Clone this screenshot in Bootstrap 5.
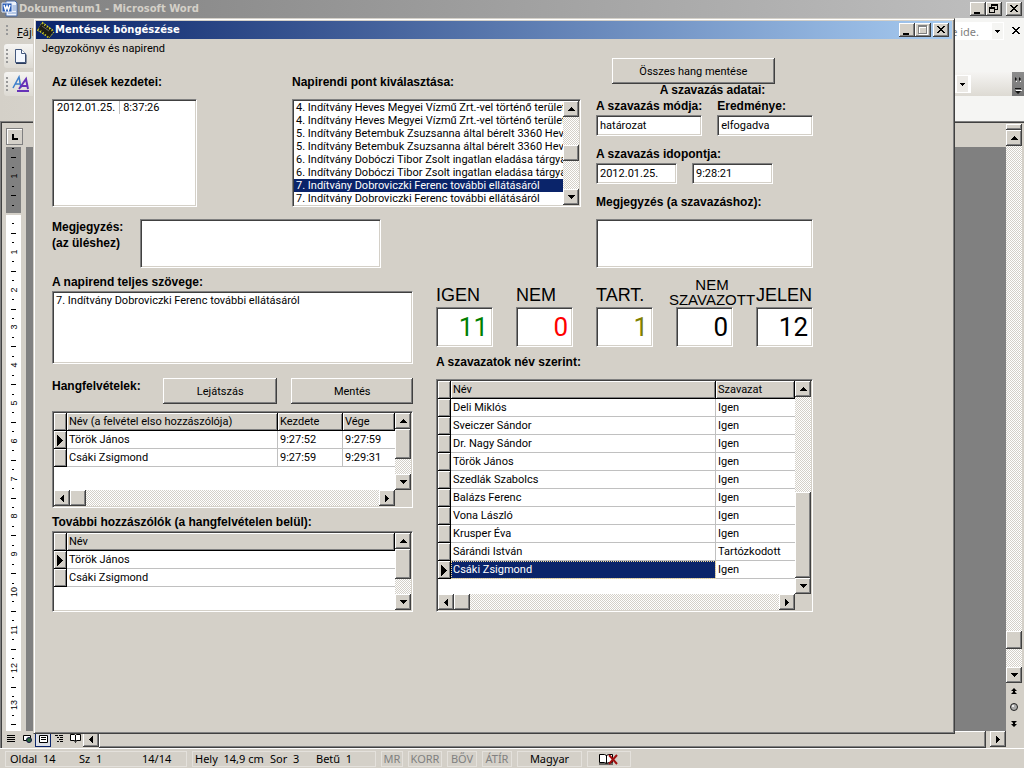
<!DOCTYPE html>
<html lang="hu">
<head>
<meta charset="utf-8">
<meta name="viewport" content="width=device-width, initial-scale=1">
<title>Mentések böngészése</title>
<link href="https://cdn.jsdelivr.net/npm/bootstrap@5.3.0/dist/css/bootstrap.min.css" rel="stylesheet">
<style>
:root{--face:#d4d0c8;--dark:#404040;--mid:#808080;--navy:#0a246a;--ui:"Noto Sans","Open Sans",sans-serif;--form:Roboto,"Liberation Sans",sans-serif;--capfont:"Liberation Sans",Arial,sans-serif}
body{background:var(--face);color:#000;font-family:var(--ui);font-size:11px;line-height:13px;height:100vh;overflow:hidden}
button,input,textarea,select{font:inherit;color:inherit;border:0;border-radius:0;margin:0;padding:0;background:none}
a{color:inherit;text-decoration:none}
svg{display:block}
.raised{background:var(--face);box-shadow:inset -1px -1px var(--dark),inset 1px 1px #fff,inset -2px -2px var(--mid)}
.sunken{background:#fff;border:1px solid;border-color:var(--mid) #fff #fff var(--mid);padding:1px;box-shadow:inset 1px 1px var(--dark),inset -1px -1px var(--face)}
.dither{background:repeating-conic-gradient(#fff 0 25%,var(--face) 0 50%) 0 0/2px 2px}
.sq{width:16px;height:16px;flex:none;display:flex;align-items:center;justify-content:center}
.winbtn{width:16px;height:14px;flex:none}
.titletext{font-family:"DejaVu Sans",sans-serif;font-weight:700;font-size:10px;line-height:18px}

/* word processor */
.wtitle{height:18px;padding-right:2px;background:linear-gradient(90deg,#808080,#c0c0c0);color:var(--face)}
.wbars{height:103px;background:linear-gradient(90deg,#d4d0c8,#f5f5f3 80%)}
.wmenu{height:26px}
.tbar{height:24px;background:linear-gradient(#f5f4f2,#dddad3);border-radius:3px 0 0 3px}
.askbox{width:100px;height:18px;background:#fff;color:#808080;white-space:nowrap}
.askdrop{width:11px;background:#f5f5f3;margin:1px}
.tdrop{height:18px;width:18px;background:#fff;padding-left:4px}
.tdrop span{background:#eceae6;width:11px;height:16px}
.chevs{width:12px;height:24px;margin-left:41px;background:linear-gradient(#8c8c8c,#757575)}
.wbody{border-top:1px solid var(--mid);border-left:1px solid var(--mid);box-shadow:inset 1px 1px var(--dark);padding:2px 2px 0 5px}
.vruler{width:15px}
.tabsel{width:17px;height:17px;border:1px solid var(--mid);box-shadow:inset 1px 1px #fff}
.page-bg{background:#808080;margin-left:5px}
.wbottom{height:17px;padding-left:2px;border-left:1px solid var(--mid);box-shadow:inset 1px 0 var(--dark)}
.viewbtn{width:16px;height:16px}
.viewbtn.picked{border:1px solid var(--navy);background:#dcdfe6}
.wstatus{height:20px;border-top:1px solid #fff;padding:2px 0 1px 5px}
.wstatus>div{border:1px solid #e4e1dc;height:16px;line-height:14px;white-space:pre;overflow:hidden;flex:none;margin-right:5px}
.off{color:#808080}

/* dialog over the word processor */
.dlg{position:absolute;inset:18px 69px 34px 33px;background:var(--face);border:1px solid;border-color:var(--face) var(--dark) var(--dark) var(--face);box-shadow:inset 1px 1px #fff,inset -1px -1px var(--mid);padding:2px}
.dtitle{height:18px;padding-right:3px;background:linear-gradient(90deg,#0a246a,#a6caf0);color:#fff}
.dmenu{height:19px;padding-left:6px;line-height:19px;font-family:var(--form)}
.dform{padding:0 139px 0 16px;font-family:var(--form);font-size:11px}
.cap{font-family:var(--capfont);font-weight:700;font-size:12px;line-height:13px;white-space:nowrap;display:block}
.pushbtn{height:26px;text-align:center}
.top-cols{display:grid;grid-template-columns:529fr 217fr;column-gap:15px}
.bottom-cols{display:grid;grid-template-columns:361fr 377fr;column-gap:23px}
.lists{display:grid;grid-template-columns:145fr 289fr;column-gap:95px;row-gap:10px;padding-top:18px}
.lbox{height:108px}
.lbox select{width:100%;height:104px;overflow:hidden;outline:0}
.lbox option{padding:0 0 0 2px;min-height:13px;height:13px;line-height:13px;font-size:11px}
.lbox option:checked{background:linear-gradient(var(--navy),var(--navy));color:#fff}
.lbox td{padding:0 4px 0 3px;line-height:13px}
.lbox td+td{border-left:1px solid #c0c0c0}
.memo{resize:none;display:block;width:100%;padding:2px 3px;outline:0}
.field{height:21px;padding:1px 3px;display:block;min-width:0;width:100%}
.fields-a{display:grid;grid-template-columns:105fr 97fr;column-gap:15px;row-gap:2px}
.fields-b{display:grid;grid-template-columns:81fr 81fr 25fr;column-gap:15px}
.counters{display:grid;grid-template-columns:repeat(5,minmax(0,1fr));column-gap:23px}
.counters label{height:39px;display:flex;align-items:flex-end;font-family:var(--capfont);font-size:18px;line-height:23px;white-space:nowrap}
.counters label.twoline{font-size:15px;line-height:15px;width:88px;margin-left:-8px;text-align:center;justify-content:center}
.counters input{height:40px;width:100%;display:block;text-align:right;font-size:26px;padding:1px 4px}
.gridbox{display:grid;grid-template-columns:minmax(0,1fr) 16px}
.gtable{table-layout:fixed;width:100%;border-collapse:separate;border-spacing:0}
.gtable th,.gtable td{height:18px;line-height:17px;padding:0 3px 0 2px;font-weight:400;white-space:nowrap;overflow:hidden;border-right:1px solid #c0c0c0;border-bottom:1px solid #c0c0c0}
.gtable td:last-child{border-right:0}
.gtable th{background:var(--face);border-color:#000;box-shadow:inset 1px 1px #fff,inset -1px -1px var(--mid)}
.gtable td.ind{background:var(--face);border-color:#000;box-shadow:inset 1px 1px #fff,inset -1px -1px var(--mid);padding:0 0 0 3px}
.gtable .ind svg{display:inline-block;vertical-align:middle}
.gtable td.sel{background:var(--navy);color:#fff;outline:1px dotted #f5db95;outline-offset:-1px}
.indcol{width:13px}
</style>
</head>
<body class="d-flex flex-column">
<svg width="0" height="0" class="position-absolute" aria-hidden="true">
 <defs>
  <symbol id="up" viewBox="0 0 7 4"><path d="M3 0h1v1h1v1h1v1h1v1H0V3h1V2h1V1h1z"/></symbol>
  <symbol id="down" viewBox="0 0 7 4"><path d="M0 0h7v1H6v1H5v1H4v1H3V3H2V2H1V1H0z"/></symbol>
  <symbol id="left" viewBox="0 0 4 7"><path d="M3 0h1v7H3V6H2V5H1V4H0V3h1V2h1V1h1z"/></symbol>
  <symbol id="right" viewBox="0 0 4 7"><path d="M0 0h1v1h1v1h1v1h1v1H3v1H2v1H1v1H0z"/></symbol>
  <symbol id="drop" viewBox="0 0 5 3"><path d="M0 0h5v1H4v1H3v1H2V2H1V1H0z"/></symbol>
  <symbol id="cur" viewBox="0 0 6 11"><path d="M0 0h1v1h1v1h1v1h1v1h1v1h1v1H5v1H4v1H3v1H2v1H1v1H0z"/></symbol>
  <symbol id="min" viewBox="0 0 16 14"><path d="M4 10h6v2H4z"/></symbol>
  <symbol id="close" viewBox="0 0 16 14"><path d="M4 3h2v1h1v1h2V4h1V3h2v1h-1v1h-1v1H9v1h1v1h1v1h1v1h-2V9H9V8H7v1H6v1H4V9h1V8h1V7h1V6H6V5H5V4H4z"/></symbol>
  <symbol id="max" viewBox="0 0 16 14"><path d="M4 3h9v9H4zM5 5v6h7V5z" fill="#fff" fill-rule="evenodd"/><path d="M3 2h9v9H3zM4 4v6h7V4z" fill="#808080" fill-rule="evenodd"/></symbol>
  <symbol id="restore" viewBox="0 0 16 14"><path d="M5 2h7v6H9V7h2V4H6v1H5z"/><path d="M3 5h6v6H3zM4 7v3h4V7z" fill-rule="evenodd"/></symbol>
 </defs>
</svg>

<header class="wtitle d-flex align-items-center flex-shrink-0">
 <svg class="flex-shrink-0" width="19" height="18" viewBox="0 0 19 18"><path d="M6 1h9l2 2v13H6z" fill="#eef3fb" stroke="#4468a8"/><path d="M12 6h4M12 8h4M12 10h4M8 13h8" stroke="#7b9bd0"/><path d="M2 3h10v9H2z" fill="#2a5db5" stroke="#dfe8f8"/><path d="M4 5l1.500 5L7 6l1.500 4L10 5" stroke="#fff" stroke-width="1.500" fill="none"/></svg>
 <span class="titletext">Dokumentum1 - Microsoft Word</span>
 <div class="ms-auto d-flex">
  <button class="winbtn raised" aria-label="Kis méret"><svg width="16" height="14"><use href="#min"/></svg></button>
  <button class="winbtn raised" aria-label="Előző méret"><svg width="16" height="14"><use href="#restore"/></svg></button>
  <button class="winbtn raised ms-1" aria-label="Bezárás"><svg width="16" height="14"><use href="#close"/></svg></button>
 </div>
</header>

<div class="wbars flex-shrink-0">
 <div class="wmenu d-flex align-items-center">
  <svg class="ms-1 me-2 flex-shrink-0" width="5" height="14"><path d="M2 1h2v2H2zM2 5h2v2H2zM2 9h2v2H2z" fill="#999"/></svg>
  <a href="#"><u>F</u>ájl</a>
  <div class="askbox d-flex ms-auto justify-content-end align-items-stretch"><span class="me-2 pe-1 align-self-center">e ide.</span><span class="askdrop d-flex align-items-center justify-content-center"><svg width="5" height="3"><use href="#drop"/></svg></span></div>
  <button class="ms-1 me-0" aria-label="Dokumentum bezárása"><svg width="16" height="14"><use href="#close"/></svg></button>
 </div>
 <div class="tbar d-flex align-items-center ms-1 w-25">
  <svg class="flex-shrink-0" width="34" height="24"><path d="M2 5h2v2H2zM2 9h2v2H2zM2 13h2v2H2zM2 17h2v2H2z" fill="#999"/><path d="M11.500 5.500h6l4 4v9h-10z" fill="#f4f8ff" stroke="#44597e"/><path d="M17.500 5.500v4h4" fill="#fff" stroke="#44597e"/><path d="M12 19.500h10v-9" fill="none" stroke="#2c3c5c"/></svg>
 </div>
 <div class="d-flex align-items-center ms-1 mt-1 tbar">
  <svg class="flex-shrink-0" width="34" height="24"><path d="M2 5h2v2H2zM2 9h2v2H2zM2 13h2v2H2zM2 17h2v2H2z" fill="#999"/><path d="M9 16l6-11 2 11M11 12h5" fill="none" stroke="#3d7fcb" stroke-width="1.500"/><path d="M15 17l7-10 2 10M17 14h6M13 19h12" fill="none" stroke="#6633b8" stroke-width="2"/></svg>
  <div class="tdrop ms-auto d-flex align-items-center"><span class="d-flex align-items-center justify-content-center"><svg width="5" height="3"><use href="#drop"/></svg></span></div>
  <div class="chevs"><svg width="12" height="24"><path d="M3 5l2 2-2 2zM7 5l2 2-2 2zM3 16h6v1H3zM3 19h6l-3 3z" fill="#111"/><path d="M4 9h1v1H4zM8 9h1v1H8zM4 18h6v1H4z" fill="#fff"/></svg></div>
 </div>
</div>

<main class="wbody d-flex flex-fill" style="min-height:0">
 <div class="d-flex flex-column flex-fill">
  <div class="d-flex" style="height:23px"><button class="tabsel mt-1" aria-label="Tabulátor"><svg width="15" height="15"><path d="M5 5h2v4h4v2H5z"/></svg></button></div>
  <div class="d-flex flex-fill" style="min-height:0">
   <svg class="vruler flex-shrink-0" id="ruler" width="15" height="584" font-family="Liberation Sans, sans-serif" font-size="9"><path d="M0 0h15v66H0z" fill="#808080"/><path d="M0 68h15v516H0z" fill="#fff"/></svg>
   <div class="page-bg flex-fill"></div>
  </div>
 </div>
 <div class="d-flex flex-column dither" style="width:16px">
  <div class="raised" style="height:6px"></div>
  <button class="sq raised" aria-label="Fel"><svg width="7" height="4"><use href="#up"/></svg></button>
  <div class="flex-fill"></div>
  <div class="raised sq" style="height:18px"></div>
  <div style="height:18px"></div>
  <button class="sq raised" aria-label="Le"><svg width="7" height="4"><use href="#down"/></svg></button>
  <svg width="16" height="48" style="background:#d4d0c8"><path d="M8 5l3 3H9v1l2 2H5l2-2V8H5z"/><circle cx="8" cy="24" r="3.500" fill="#aaa" stroke="#222"/><circle cx="7" cy="23" r="1" fill="#fff"/><path d="M8 44l3-3H9v-1l2-2H5l2 2v1H5z"/></svg>
 </div>
</main>

<div class="wbottom d-flex flex-shrink-0">
 <button class="viewbtn" aria-label="Normál nézet"><svg width="14" height="16"><path d="M4 4h8v1H4zM4 6h8v1H4zM4 8h8v1H4zM4 10h8v1H4z"/></svg></button>
 <button class="viewbtn" aria-label="Webes nézet"><svg width="16" height="16"><path d="M4.500 4.500h7v5h-7z" fill="#fff" stroke="#000"/><circle cx="10" cy="9" r="2.500" fill="#2a6a3a" stroke="#114"/></svg></button>
 <button class="viewbtn picked" aria-label="Nyomtatási nézet"><svg width="14" height="14"><path d="M3.500 3.500h8v7h-8z" fill="#fff" stroke="#000"/><path d="M5 5.500h5M5 7.500h5" stroke="#000"/></svg></button>
 <button class="viewbtn" aria-label="Vázlatnézet"><svg width="16" height="16"><path d="M4 4h3v1H4zM8 4h4v1H8zM6 6h2v1H6zM9 6h3v1H9zM8 8h4v1H8zM6 10h2v1H6zM9 10h3v1H9z"/></svg></button>
 <button class="viewbtn" aria-label="Olvasás"><svg width="16" height="16"><path d="M3.500 3.500h4l1 1 1-1h4v6h-4l-1 2-1-2h-4zM8.500 4v6" fill="#fff" stroke="#000"/></svg></button>
 <button class="sq raised" aria-label="Balra"><svg width="4" height="7"><use href="#left"/></svg></button>
 <div class="raised flex-fill"></div>
 <button class="sq raised ms-1" aria-label="Jobbra"><svg width="4" height="7"><use href="#right"/></svg></button>
 <div style="width:18px"></div>
</div>

<footer class="wstatus d-flex flex-shrink-0">
 <div class="d-flex" style="width:182px"><span class="ms-1" style="width:69px">Oldal  14</span><span style="width:63px">Sz  1</span><span>14/14</span></div>
 <div class="d-flex" style="width:184px"><span style="width:75px;margin-left:2px">Hely  14,9 cm</span><span style="width:46px">Sor  3</span><span>Betű  1</span></div>
 <div class="off text-center" style="width:22px">MR</div>
 <div class="off text-center" style="width:34px">KORR</div>
 <div class="off text-center" style="width:30px">BŐV</div>
 <div class="off text-center" style="width:30px">ÁTÍR</div>
 <div class="text-center" style="width:65px">Magyar</div>
 <div class="ps-2" style="width:44px"><svg width="26" height="14"><path d="M3.500 2.500h5l2 1 2-1h4v8h-4l-2 1-2-1h-5zM10.500 3v8" fill="#fff" stroke="#000"/><path d="M3 12h14" stroke="#000"/><path d="M13 3l8 9M21 3l-8 9" stroke="#a01010" stroke-width="2"/></svg></div>
</footer>

<section class="dlg d-flex flex-column" role="dialog" aria-label="Mentések böngészése">
 <div class="dtitle d-flex align-items-center flex-shrink-0">
  <svg class="flex-shrink-0" width="19" height="18"><path d="M3 7l3-5M5 9l4-5M7 11l5-6M9 13l5-6M11 15l5-6M13 17l5-6M1 9l13 8M6 1l12 9" stroke="#d6cf1c" stroke-width="1" stroke-dasharray="2 1"/><path d="M2 8l4-6 11 8-4 7z" fill="#1c1c14"/><path d="M2 8l11 9M6 2l11 8" stroke="#d6cf1c" stroke-width="2" stroke-dasharray="1 2"/><path d="M6 5l7 5" stroke="#666"/></svg>
  <span class="titletext">Mentések böngészése</span>
  <div class="ms-auto d-flex">
   <button class="winbtn raised" aria-label="Kis méret"><svg width="16" height="14"><use href="#min"/></svg></button>
   <button class="winbtn raised" aria-label="Teljes méret" disabled><svg width="16" height="14"><use href="#max"/></svg></button>
   <button class="winbtn raised" style="margin-left:2px" aria-label="Bezárás"><svg width="16" height="14"><use href="#close"/></svg></button>
  </div>
 </div>
 <nav class="dmenu flex-shrink-0"><a href="#">Jegyzokönyv és napirend</a></nav>

 <form class="dform">
  <div class="top-cols">
   <div>
    <div class="lists">
     <span class="cap" id="l-ules">Az ülések kezdetei:</span>
     <label class="cap" for="agenda">Napirendi pont kiválasztása:</label>
     <div class="sunken lbox"><table aria-labelledby="l-ules"><tr><td>2012.01.25.</td><td>8:37:26</td></tr></table></div>
     <div class="sunken lbox d-flex">
      <select id="agenda" size="8" class="flex-fill">
       <option>4. Indítvány Heves Megyei Vízmű Zrt.-vel történő területcsere</option>
       <option>4. Indítvány Heves Megyei Vízmű Zrt.-vel történő területcsere</option>
       <option>5. Indítvány Betembuk Zsuzsanna által bérelt 3360 Heves</option>
       <option>5. Indítvány Betembuk Zsuzsanna által bérelt 3360 Heves</option>
       <option>6. Indítvány Dobóczi Tibor Zsolt ingatlan eladása tárgyában</option>
       <option>6. Indítvány Dobóczi Tibor Zsolt ingatlan eladása tárgyában</option>
       <option selected>7. Indítvány Dobroviczki Ferenc további ellátásáról</option>
       <option>7. Indítvány Dobroviczki Ferenc további ellátásáról</option>
      </select>
      <div class="d-flex flex-column dither flex-shrink-0" style="width:16px">
       <button type="button" class="sq raised" aria-label="Fel"><svg width="7" height="4"><use href="#up"/></svg></button>
       <div style="flex:28"></div><div class="sq raised"></div><div style="flex:28"></div>
       <button type="button" class="sq raised" aria-label="Le"><svg width="7" height="4"><use href="#down"/></svg></button>
      </div>
     </div>
    </div>
    <div class="d-flex" style="margin-top:12px">
     <label class="cap" for="m1" style="width:88px;line-height:16px">Megjegyzés:<br>(az üléshez)</label>
     <textarea id="m1" class="memo sunken" style="width:241px;height:49px"></textarea>
    </div>
   </div>
   <div>
    <button type="button" class="pushbtn raised d-block w-75 ms-3">Összes hang mentése</button>
    <span class="cap text-center ps-3" style="margin-bottom:3px">A szavazás adatai:</span>
    <div class="fields-a">
     <label class="cap" for="f1">A szavazás módja:</label><label class="cap" for="f2">Eredménye:</label>
     <input id="f1" class="field sunken" value="határozat"><input id="f2" class="field sunken" value="elfogadva">
    </div>
    <label class="cap" for="f3" style="margin:12px 0 2px">A szavazás idopontja:</label>
    <div class="fields-b"><input id="f3" class="field sunken" value="2012.01.25."><input aria-label="Idő" class="field sunken" value="9:28:21"></div>
    <label class="cap" for="m2" style="margin:12px 0 10px">Megjegyzés  (a szavazáshoz):</label>
    <textarea id="m2" class="memo sunken" style="height:49px"></textarea>
   </div>
  </div>

  <div class="bottom-cols">
   <div>
    <label class="cap" for="m3" style="margin:8px 0 2px">A napirend teljes szövege:</label>
    <textarea id="m3" class="memo sunken" style="height:73px">7. Indítvány Dobroviczki Ferenc további ellátásáról</textarea>
    <div class="d-flex" style="margin:14px 0 7px">
     <span class="cap" style="width:111px;padding-top:2px" id="l-hang">Hangfelvételek:</span>
     <button type="button" class="pushbtn raised" style="flex:114">Lejátszás</button>
     <button type="button" class="pushbtn raised" style="flex:121;margin-left:14px">Mentés</button>
    </div>
    <div class="sunken gridbox" style="height:97px;grid-template-rows:1fr 16px">
     <div><table class="gtable" aria-labelledby="l-hang">
      <colgroup><col class="indcol"><col><col style="width:65px"><col style="width:52px"></colgroup>
      <thead><tr><th></th><th>Név (a felvétel elso hozzászólója)</th><th>Kezdete</th><th>Vége</th></tr></thead>
      <tbody>
       <tr><td class="ind"><svg width="6" height="11"><use href="#cur"/></svg></td><td>Török János</td><td>9:27:52</td><td>9:27:59</td></tr>
       <tr><td class="ind"></td><td>Csáki Zsigmond</td><td>9:27:59</td><td>9:29:31</td></tr>
      </tbody></table></div>
     <div class="d-flex flex-column dither">
      <button type="button" class="sq raised" aria-label="Fel"><svg width="7" height="4"><use href="#up"/></svg></button>
      <div class="raised" style="flex:30"></div><div style="flex:15"></div>
      <button type="button" class="sq raised" aria-label="Le"><svg width="7" height="4"><use href="#down"/></svg></button>
     </div>
     <div class="d-flex dither">
      <button type="button" class="sq raised" aria-label="Balra"><svg width="4" height="7"><use href="#left"/></svg></button>
      <div class="sq raised"></div>
      <button type="button" class="sq raised ms-auto" aria-label="Jobbra"><svg width="4" height="7"><use href="#right"/></svg></button>
     </div>
     <div style="background:var(--face)"></div>
    </div>
    <span class="cap" id="l-tov" style="margin:8px 0 2px">További hozzászólók (a hangfelvételen belül):</span>
    <div class="sunken gridbox" style="height:81px">
     <div><table class="gtable" aria-labelledby="l-tov">
      <colgroup><col class="indcol"><col></colgroup>
      <thead><tr><th></th><th>Név</th></tr></thead>
      <tbody>
       <tr><td class="ind"><svg width="6" height="11"><use href="#cur"/></svg></td><td>Török János</td></tr>
       <tr><td class="ind"></td><td>Csáki Zsigmond</td></tr>
      </tbody></table></div>
     <div class="d-flex flex-column dither">
      <button type="button" class="sq raised" aria-label="Fel"><svg width="7" height="4"><use href="#up"/></svg></button>
      <div class="raised" style="flex:30"></div><div style="flex:15"></div>
      <button type="button" class="sq raised" aria-label="Le"><svg width="7" height="4"><use href="#down"/></svg></button>
     </div>
    </div>
   </div>
   <div>
    <div class="counters">
     <div><label for="c1">IGEN</label><input id="c1" class="sunken" value="11" style="color:#008000"></div>
     <div><label for="c2">NEM</label><input id="c2" class="sunken" value="0" style="color:#f00"></div>
     <div><label for="c3">TART.</label><input id="c3" class="sunken" value="1" style="color:#808000"></div>
     <div><label for="c4" class="twoline">NEM<br>SZAVAZOTT</label><input id="c4" class="sunken" value="0"></div>
     <div><label for="c5">JELEN</label><input id="c5" class="sunken" value="12"></div>
    </div>
    <span class="cap" id="l-szav" style="margin:9px 0 10px">A szavazatok név szerint:</span>
    <div class="sunken gridbox" style="height:233px;grid-template-rows:1fr 16px">
     <div><table class="gtable" aria-labelledby="l-szav">
      <colgroup><col class="indcol"><col><col style="width:79px"></colgroup>
      <thead><tr><th></th><th>Név</th><th>Szavazat</th></tr></thead>
      <tbody>
       <tr><td class="ind"></td><td>Deli Miklós</td><td>Igen</td></tr>
       <tr><td class="ind"></td><td>Sveiczer Sándor</td><td>Igen</td></tr>
       <tr><td class="ind"></td><td>Dr. Nagy Sándor</td><td>Igen</td></tr>
       <tr><td class="ind"></td><td>Török János</td><td>Igen</td></tr>
       <tr><td class="ind"></td><td>Szedlák Szabolcs</td><td>Igen</td></tr>
       <tr><td class="ind"></td><td>Balázs Ferenc</td><td>Igen</td></tr>
       <tr><td class="ind"></td><td>Vona László</td><td>Igen</td></tr>
       <tr><td class="ind"></td><td>Krusper Éva</td><td>Igen</td></tr>
       <tr><td class="ind"></td><td>Sárándi István</td><td>Tartózkodott</td></tr>
       <tr><td class="ind"><svg width="6" height="11"><use href="#cur"/></svg></td><td class="sel">Csáki Zsigmond</td><td>Igen</td></tr>
      </tbody></table></div>
     <div class="d-flex flex-column dither">
      <button type="button" class="sq raised" aria-label="Fel"><svg width="7" height="4"><use href="#up"/></svg></button>
      <div style="flex:95"></div><div class="raised" style="flex:86"></div>
      <button type="button" class="sq raised" aria-label="Le"><svg width="7" height="4"><use href="#down"/></svg></button>
     </div>
     <div class="d-flex dither">
      <button type="button" class="sq raised" aria-label="Balra"><svg width="4" height="7"><use href="#left"/></svg></button>
      <div class="sq raised"></div>
      <button type="button" class="sq raised ms-auto" aria-label="Jobbra"><svg width="4" height="7"><use href="#right"/></svg></button>
     </div>
     <div style="background:var(--face)"></div>
    </div>
   </div>
  </div>
 </form>
</section>

<script src="https://cdn.jsdelivr.net/npm/bootstrap@5.3.0/dist/js/bootstrap.bundle.min.js"></script>
<script>
// centimetre marks of the vertical ruler: zero at y=67, 37.8px per centimetre
const ruler = document.getElementById('ruler');
const ns = 'http://www.w3.org/2000/svg';
for (let q = -7; q < 55; q++) {
  const y = Math.round(67 + q * 37.8 / 4);
  if (q === 0) continue;
  if (q % 4 === 0) {
    const t = document.createElementNS(ns, 'text');
    t.textContent = Math.abs(q / 4);
    t.setAttribute('text-anchor', 'middle');
    t.setAttribute('transform', `translate(11 ${y}) rotate(-90)`);
    ruler.append(t);
  } else {
    const r = document.createElementNS(ns, 'rect');
    const long = q % 2 === 0;
    r.setAttribute('x', long ? 5 : 6);
    r.setAttribute('y', y);
    r.setAttribute('width', long ? 5 : 2);
    r.setAttribute('height', 1);
    ruler.append(r);
  }
}
</script>
</body>
</html>
